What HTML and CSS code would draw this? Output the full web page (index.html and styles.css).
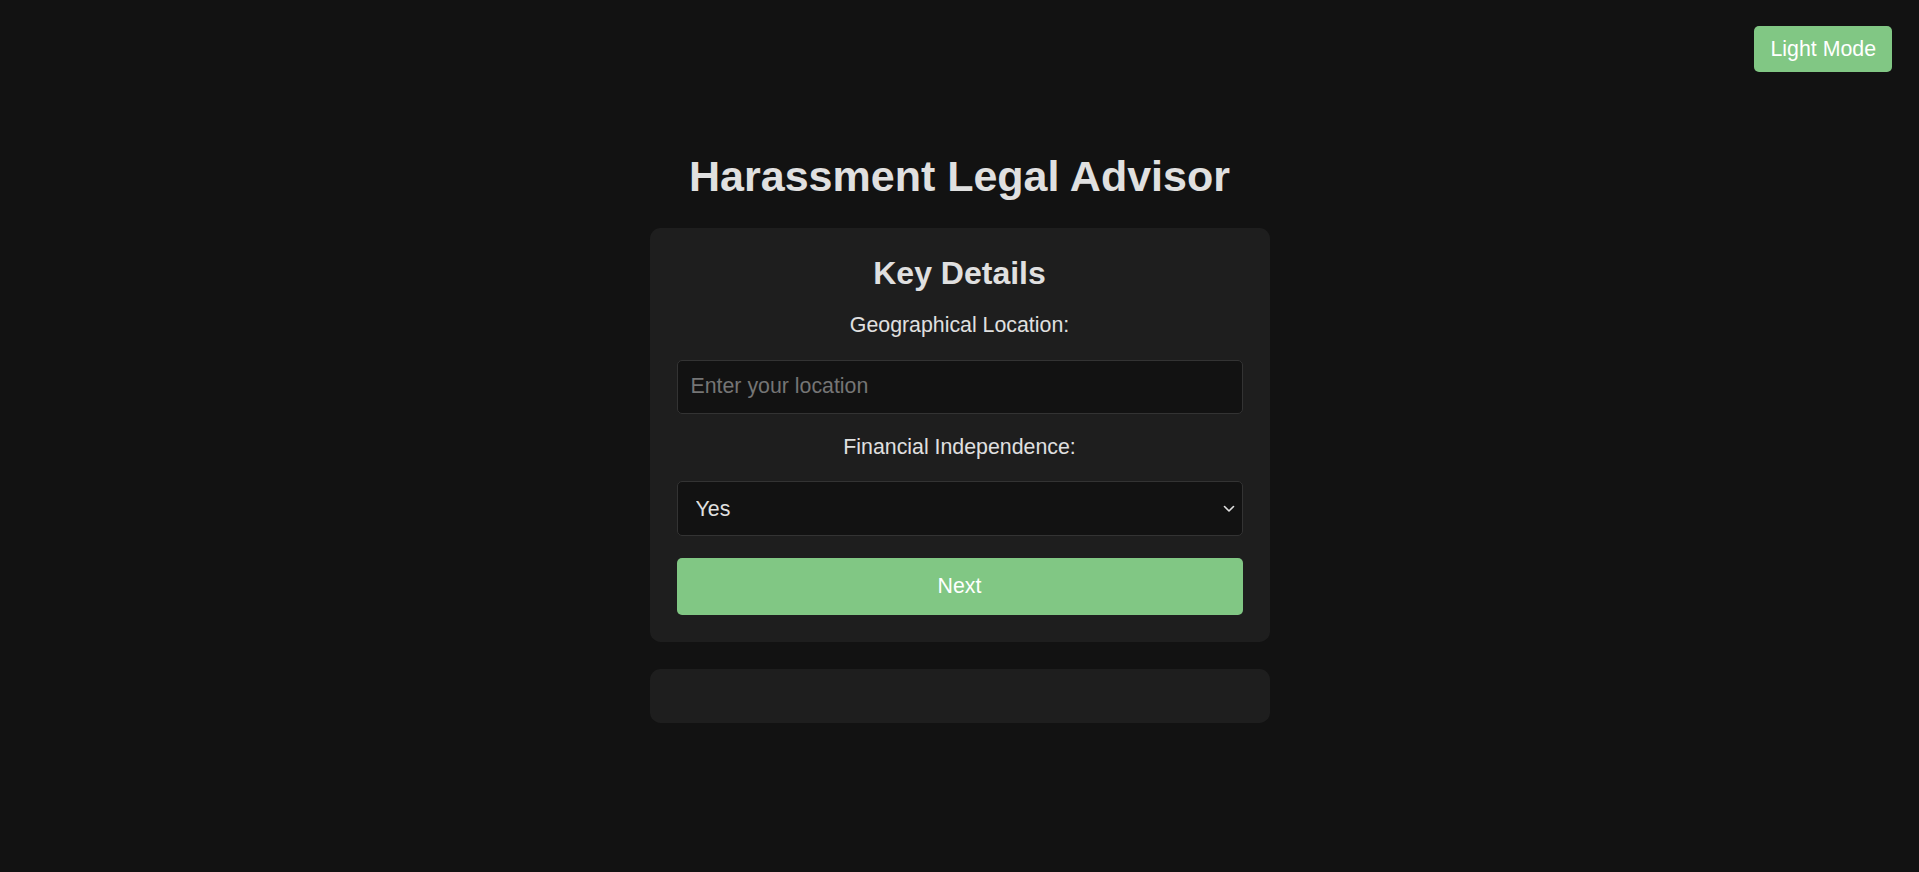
FILE: index.html
```html
<!DOCTYPE html>
<html>
<head>
    <title>Harassment Legal Advisor</title>
    <link rel="stylesheet" href="styles.css">
</head>
<body>
    <button class="theme-toggle" id="themeToggle">Light Mode</button>

    <div class="container">
        <h1>Harassment Legal Advisor</h1>

        <form class="card" id="detailsForm">
            <h2>Key Details</h2>
            <label for="location">Geographical Location:</label>
            <input type="text" id="location" name="location" placeholder="Enter your location">
            <label for="financial">Financial Independence:</label>
            <div class="select-wrap">
                <select id="financial" name="financial">
                    <option value="yes">Yes</option>
                    <option value="no">No</option>
                </select>
                <svg class="select-arrow" width="12" height="8" viewBox="0 0 12 8">
                    <path d="M1.5 1.5 L6 6 L10.5 1.5" fill="none" stroke="#e0e0e0" stroke-width="1.6" stroke-linecap="round" stroke-linejoin="round"/>
                </svg>
            </div>
            <button type="submit" class="next-btn">Next</button>
        </form>

        <div class="card result" id="result"></div>
    </div>
</body>
</html>
```

FILE: styles.css
```css
body {
    margin: 0;
    background-color: #121212;
    color: #e0e0e0;
    font-family: "Liberation Sans", Arial, sans-serif;
    min-height: 100vh;
}
.theme-toggle {
    position: absolute;
    top: 26px;
    right: 27px;
    height: 46px;
    padding: 0 16px;
    background-color: #81c784;
    color: #ffffff;
    border: none;
    border-radius: 5px;
    font-family: inherit;
    font-size: 21.33px;
    cursor: pointer;
}
.container {
    width: 620px;
    margin: 0 auto;
    padding-top: 152px;
}
h1 {
    margin: 0 0 27px;
    text-align: center;
    font-size: 43px;
    font-weight: bold;
    color: #e0e0e0;
}
.card {
    background-color: #1e1e1e;
    border-radius: 10.67px;
    padding: 27px;
    display: flex;
    flex-direction: column;
    gap: 21.33px;
}
h2 {
    margin: 0;
    text-align: center;
    font-size: 32px;
    color: #e0e0e0;
}
label {
    display: block;
    text-align: center;
    font-size: 21.33px;
    color: #e0e0e0;
}
input,
select {
    width: 100%;
    box-sizing: border-box;
    height: 54px;
    background-color: #121212;
    color: #e0e0e0;
    border: 1px solid #333;
    border-radius: 5px;
    font-family: inherit;
    font-size: 21.33px;
}
input {
    padding: 0 13px;
}
input::placeholder {
    color: #757575;
}
.select-wrap {
    position: relative;
}
select {
    height: 55px;
    padding: 0 18px;
    appearance: none;
    -webkit-appearance: none;
}
.select-arrow {
    position: absolute;
    right: 8px;
    top: 24px;
    pointer-events: none;
}
.next-btn {
    height: 57px;
    background-color: #81c784;
    color: #ffffff;
    border: none;
    border-radius: 5px;
    font-family: inherit;
    font-size: 21.33px;
    cursor: pointer;
}
.result {
    margin-top: 27px;
    min-height: 0;
}
```
